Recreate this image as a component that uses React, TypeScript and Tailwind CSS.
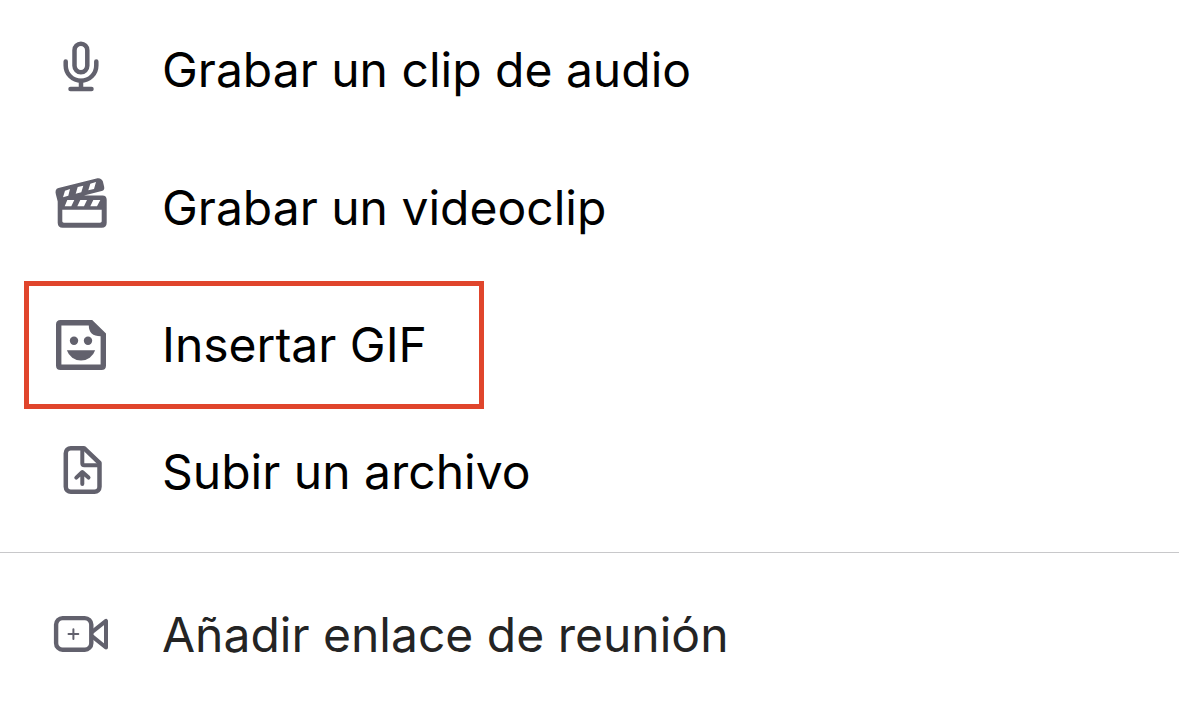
import clsx from 'clsx';
import type { ReactNode } from 'react';

const Icon = ({ children }: { children: ReactNode }) => (
  <svg
    viewBox="0 0 64 64"
    fill="none"
    stroke="currentColor"
    strokeLinecap="round"
    strokeLinejoin="round"
    aria-hidden="true"
    className="size-16 shrink-0 text-[#62616d]"
  >
    {children}
  </svg>
);

const MicIcon = () => (
  <Icon>
    <g strokeWidth="4.5">
      <rect x="25.5" y="5.8" width="12.8" height="28.4" rx="6.4" />
      <path d="M16.7 23.4v4a15.3 15.3 0 0 0 30.6 0v-4" />
      <path d="M32 43v8M21.5 51h21" />
    </g>
  </Icon>
);

const ClapperIcon = () => (
  <Icon>
    <path
      fill="currentColor"
      stroke="none"
      fillRule="evenodd"
      d="M9.5 12 47.5 2.4c3-.8 5.600.4 6.400 3.200l1.200 4.800c.6 2.400-.2 4-2.400 4.600L35 19.500h18.500c2.600 0 4.200 1.600 4.200 4.200v23c0 3.200-1.800 5-5 5h-39c-3.200 0-5-1.800-5-5V25.500L6.900 18.600c-.9-3.600-.2-5.800 2.600-6.600Z
        M16 14.700l5-1.700-1.700 6.700-5.300 1.600Z
        M28.700 11l5.600-1.300-2 6.600-5.600 1.400Z
        M41.300 7.700 47 6l-2 7-5.700 1.300Z
        M18.300 24h7l-3 6.300h-6.600Z
        M31.300 24H38l-3 6.300h-6.700Z
        M44.300 24h7L48 30.300h-6.700Z
        M13.300 33.700h39.400V45c0 1.100-.6 1.700-1.700 1.700H15c-1.100 0-1.700-.6-1.700-1.700Z"
    />
  </Icon>
);

const StickerIcon = () => (
  <Icon>
    <g fill="currentColor" stroke="none">
      <path
        fillRule="evenodd"
        d="M11.5 7h31.7L57 20.4v32.1c0 3-1.5 4.5-4.5 4.5h-41C8.5 57 7 55.5 7 52.5v-41C7 8.5 8.5 7 11.5 7Z
          M12.4 12.6v38.8h39.2V23.2c-3.8 0-7-.7-8.9-2.6s-2.9-4.6-2.9-8Z"
      />
      <circle cx="25" cy="27.8" r="4.2" />
      <circle cx="39" cy="27.8" r="4.2" />
      <path d="M17.9 37.3h28.2a14.8 14.8 0 0 1-28.2 0Z" />
    </g>
  </Icon>
);

const UploadIcon = () => (
  <Icon>
    <path
      strokeWidth="4.5"
      d="M21.8 8.2H35L50.5 23v23.8a5 5 0 0 1-5 5H21.8a5 5 0 0 1-5-5V13.2a5 5 0 0 1 5-5Z"
    />
    <path strokeWidth="4" d="M33.3 9v14.3a2 2 0 0 0 2 2H50" />
    <path strokeWidth="4" d="M33.3 44V32.2M27.3 37.6l6-5.6 6.2 5.6" />
  </Icon>
);

const MeetingIcon = () => (
  <Icon>
    <rect x="7.1" y="15.1" width="35.2" height="31.6" rx="6.5" strokeWidth="4.4" />
    <path strokeWidth="4" d="M43.5 28.6 57 17.9v26.6L43.5 33.6" />
    <path strokeWidth="2" d="M24.4 26.2v9.8M19.5 31.1h9.8" />
  </Icon>
);

interface MenuItemProps {
  icon: ReactNode;
  label: string;
  className: string;
}

const MenuItem = ({ icon, label, className }: MenuItemProps) => (
  <button
    type="button"
    className={clsx('flex items-center gap-[49px] text-left', className)}
  >
    {icon}
    <span>{label}</span>
  </button>
);

const App = () => (
  <main className="min-h-screen bg-white pt-px font-['Inter',sans-serif] text-[48px] leading-[60px] text-black">
    <div className="flex flex-col border-b border-[#c8c8ca] pb-[17px]">
      <MenuItem
        icon={<MicIcon />}
        label="Grabar un clip de audio"
        className="h-[138px] px-[49px]"
      />
      <MenuItem
        icon={<ClapperIcon />}
        label="Grabar un videoclip"
        className="h-[138px] px-[49px]"
      />
      {/* Highlighted entry */}
      <MenuItem
        icon={<StickerIcon />}
        label="Insertar GIF"
        className="mx-6 mt-1 h-32 self-start border-5 border-[#e0452c] pl-5 pr-13"
      />
      <MenuItem
        icon={<UploadIcon />}
        label="Subir un archivo"
        className="h-[126px] px-[49px]"
      />
    </div>
    <MenuItem
      icon={<MeetingIcon />}
      label="Añadir enlace de reunión"
      className="h-[164px] w-full px-[49px] text-[#242424]"
    />
  </main>
);

export default App;
